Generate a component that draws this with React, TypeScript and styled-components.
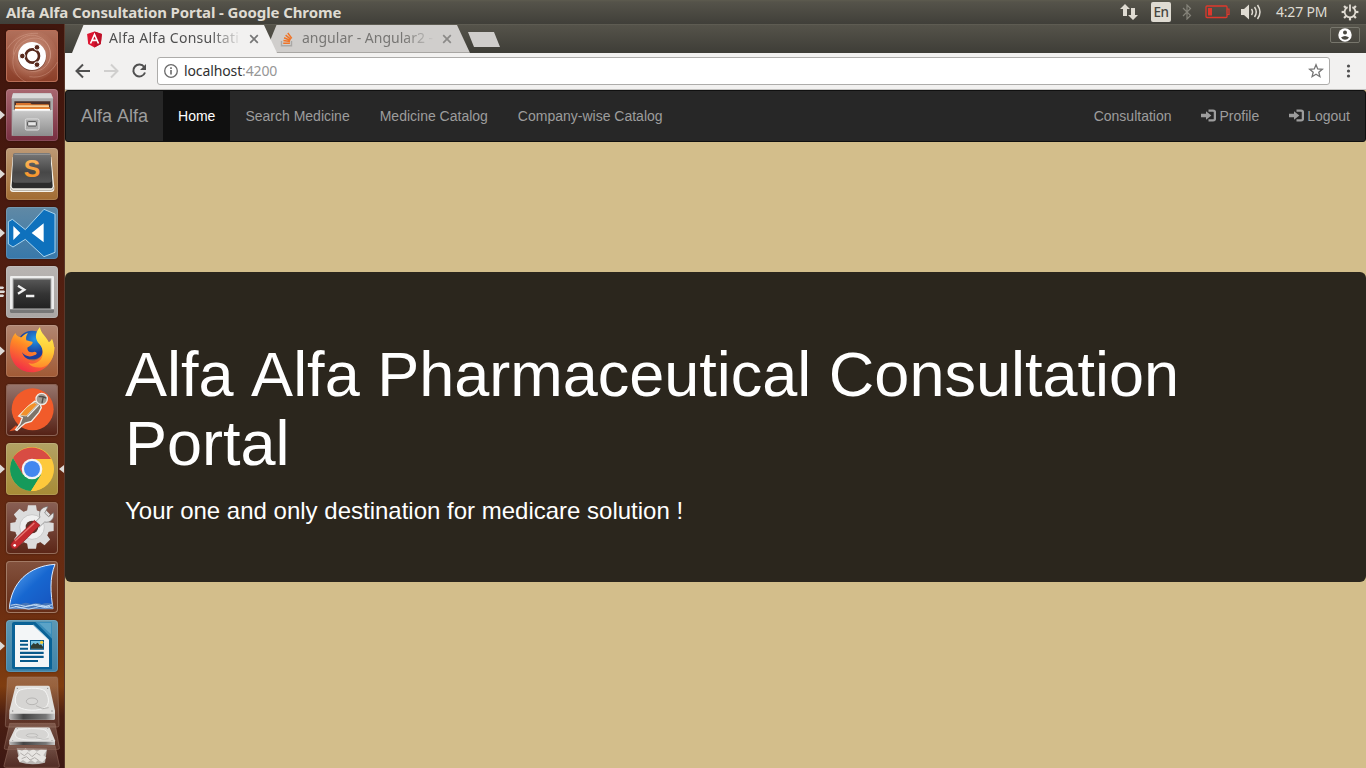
import React from 'react';
import styled, { createGlobalStyle, css } from 'styled-components';

const GlobalStyle = createGlobalStyle`
  * { box-sizing: border-box; }
  body { margin: 0; overflow: hidden; background: #43180e; }
  svg { display: block; flex: none; }
`;

const uiFont = css`font-family: 'Noto Sans', 'Open Sans', sans-serif;`;

const Desktop = styled.div`
  width: 1366px;
  height: 768px;
  display: flex;
  flex-direction: column;
  overflow: hidden;
`;

const SystemBar = styled.header`
  ${uiFont}
  height: 24px;
  flex: none;
  display: flex;
  align-items: center;
  justify-content: space-between;
  padding: 0 7px 0 6px;
  background: linear-gradient(#5d5b4f 0, #55534a 2px, #403f39 100%);
  color: #dfdbd2;
`;

const WindowTitle = styled.div`
  font-size: 15px;
  font-weight: 700;
  letter-spacing: -0.11px;
  line-height: 24px;
  white-space: nowrap;
`;

const Indicators = styled.div`
  display: flex;
  align-items: center;
  height: 24px;
`;

const LanguageBadge = styled.span`
  width: 20px;
  height: 20px;
  margin-left: 13px;
  border-radius: 2px;
  background: #dfdbd2;
  color: #45443e;
  font-size: 13.5px;
  font-weight: 500;
  letter-spacing: -0.5px;
  line-height: 21px;
  text-align: center;
`;

const Clock = styled.span`
  width: 54px;
  margin-left: 14px;
  font-size: 14px;
  letter-spacing: -0.2px;
  line-height: 24px;
  white-space: nowrap;
`;

const IndicatorIcon = styled.span<{ $gap: number }>`
  margin-left: ${(p) => p.$gap}px;
`;

const Workspace = styled.div`
  display: flex;
  flex: 1;
  min-height: 0;
`;

const Launcher = styled.nav`
  width: 65px;
  flex: none;
  display: flex;
  flex-direction: column;
  gap: 7px;
  padding-top: 6px;
  border-right: 1px solid #5a382b;
  background: linear-gradient(#40160d 0, #48190f 22%, #572211 42%, #622812 62%, #6b2d11 78%, #7f3d10 89%, #4a1e12 93%, #3c1813 100%);
  overflow: hidden;
`;

const LauncherRow = styled.div`
  height: 52px;
  flex: none;
  display: grid;
  grid-template-columns: 6px 52px 6px;
  align-items: center;
`;

const Tile = styled.div<{ $from: string; $to: string; $edge: string }>`
  width: 52px;
  height: 52px;
  border-radius: 4px;
  background: linear-gradient(${(p) => p.$from}, ${(p) => p.$to});
  box-shadow: inset 0 0 0 1px ${(p) => p.$edge}, 0 0 2px rgba(0, 0, 0, 0.45);
  overflow: hidden;
`;

const StackedDevices = styled.div`
  height: 93px;
  margin-top: -4px;
  flex: none;
`;

const BrowserWindow = styled.main`
  flex: 1;
  min-width: 0;
  display: flex;
  flex-direction: column;
`;

const TabStrip = styled.div`
  ${uiFont}
  height: 29px;
  flex: none;
  display: flex;
  align-items: flex-start;
  padding: 1px 6px 0 7px;
  background: linear-gradient(#66645a 0, #55534a 1px, #3e3d37 100%);
`;

const Tab = styled.div<{ $active?: boolean }>`
  width: 205px;
  height: 28px;
  flex: none;
  display: flex;
  align-items: center;
  padding: 0 17px 0 14px;
  margin-left: ${(p) => (p.$active ? '0' : '-12px')};
  z-index: ${(p) => (p.$active ? 1 : 0)};
  clip-path: polygon(0 100%, 11.5px 0, 192px 0, 100% 100%);
  background: ${(p) => (p.$active ? '#f2f1f0' : 'linear-gradient(#d0cecc 27px, #a8a6a3 27px)')};
  color: ${(p) => (p.$active ? '#505050' : '#777674')};
`;

const TabTitle = styled.span<{ $spacing: number }>`
  width: 134px;
  margin: 0 6px 2px 6px;
  font-size: 14px;
  letter-spacing: ${(p) => p.$spacing}px;
  line-height: 26px;
  white-space: nowrap;
  mask-image: linear-gradient(90deg, #000 102px, transparent 133px);
`;

const NewTab = styled.div`
  width: 32px;
  height: 15px;
  margin: 7px 0 0 -2px;
  clip-path: polygon(0 0, 26px 0, 32px 100%, 6px 100%);
  background: #cfcdcb;
`;

const ProfileButton = styled.div`
  width: 30px;
  height: 16px;
  margin: 2px 0 0 auto;
  display: flex;
  align-items: center;
  justify-content: center;
  border: 1px solid #77766c;
  border-radius: 2px;
`;

const Toolbar = styled.div`
  ${uiFont}
  height: 37px;
  flex: none;
  display: flex;
  align-items: center;
  padding: 0 8px 1px 9px;
  border-bottom: 1px solid #c2c1bf;
  background: #f2f1f0;
`;

const NavButtons = styled.div`
  width: 83px;
  display: flex;
  gap: 10px;
`;

const AddressBar = styled.div`
  width: 1173px;
  height: 28px;
  display: flex;
  align-items: center;
  padding: 0 5px;
  border: 1px solid #adacaa;
  border-radius: 3px;
  background: #fff;
`;

const Address = styled.span`
  flex: 1;
  margin-left: 5px;
  color: #303030;
  font-size: 14px;
  letter-spacing: -0.12px;
  line-height: 26px;
`;

const Port = styled.span`
  color: #969696;
`;

const MenuButton = styled.div`
  margin-left: 10px;
`;

const Page = styled.div`
  flex: 1;
  display: flex;
  flex-direction: column;
  background: #d3be8b;
  font-family: 'Liberation Sans', Arial, sans-serif;
`;

const Navbar = styled.nav`
  height: 52px;
  flex: none;
  display: flex;
  border: 1px solid #101010;
  border-radius: 3px;
  background: #272727;
`;

const Brand = styled.a`
  padding: 0 15px;
  color: #9d9d9d;
  font-size: 18px;
  line-height: 50px;
  word-spacing: 1px;
`;

const NavGroup = styled.div<{ $end?: boolean }>`
  display: flex;
  margin-left: ${(p) => (p.$end ? 'auto' : '0')};
`;

const NavLink = styled.a<{ $active?: boolean }>`
  display: flex;
  align-items: center;
  gap: 3px;
  padding: 0 15px;
  background: ${(p) => (p.$active ? '#101010' : 'transparent')};
  color: ${(p) => (p.$active ? '#fff' : '#9d9d9d')};
  font-size: 14px;
  line-height: 50px;
  white-space: nowrap;
`;

const Hero = styled.section`
  height: 310px;
  margin-top: 130px;
  padding: 68px 60px 48px;
  border-radius: 6px;
  background: #2b261d;
  color: #fff;
`;

const HeroTitle = styled.h1`
  margin: 0;
  font-size: 63px;
  font-weight: 400;
  line-height: 69.3px;
`;

const LeadWord = styled.span`
  margin-right: 0.056em;
`;

const HeroText = styled.h3`
  margin: 19px 0 0;
  font-size: 24px;
  font-weight: 400;
  line-height: 26.4px;
`;

const Icon = ({ size = 52, children }: { size?: number; children: React.ReactNode }) => (
  <svg width={size} height={size} viewBox="0 0 156 156">{children}</svg>
);

const UbuntuIcon = () => (
  <Icon>
    <defs>
      <radialGradient id="ubg"><stop offset=".3" stopColor="#ecc0aa" stopOpacity=".6" /><stop offset="1" stopColor="#c98a72" stopOpacity=".1" /></radialGradient>
    </defs>
    <circle cx="78" cy="78" r="76" fill="url(#ubg)" />
    <g fill="none" stroke="#e6b8a4" strokeOpacity=".5" strokeWidth="2">
      <path d="M60 156C20 136 8 90 36 50c20-26 60-36 84-12 16 18 18 44 6 62" />
      <path d="M22 74c-2-36 30-62 64-58 32 6 52 36 46 68-6 30-34 46-62 38" />
      <path d="M4 56C24 24 56 8 96 10M154 96c-18 34-48 50-84 44" />
    </g>
    <circle cx="78" cy="80" r="43" fill="#4b1c10" opacity=".5" />
    <circle cx="78" cy="78" r="42" fill="#fff" />
    <circle cx="79" cy="78" r="20" fill="none" stroke="#57291c" strokeWidth="8" />
    <g stroke="#fff" strokeWidth="3" fill="#57291c">
      <circle cx="49" cy="78" r="8.5" /><circle cx="93" cy="52" r="8.5" /><circle cx="93" cy="104" r="8.5" />
    </g>
  </Icon>
);

const FilesIcon = () => (
  <Icon>
    <defs>
      <linearGradient id="fg" x2="0" y2="1"><stop stopColor="#c9c9c9" /><stop offset="1" stopColor="#8d8d8d" /></linearGradient>
    </defs>
    <path d="M21 13h114l6 15v112H17V28z" fill="#aaa" />
    <path d="M21 13h114l6 15H17z" fill="#d9d9d9" />
    <path d="M25 37h108v30H25z" fill="#4a302a" />
    <path d="M30 42h43l4 4h51v10H30z" fill="#d9742c" />
    <path d="M27 49h102v5H27z" fill="#f6d29c" />
    <path d="M27 55h104v5H27z" fill="#e98534" />
    <path d="M26 60h106v6H26z" fill="#fff" />
    <path d="M20 65h119v76H20z" fill="url(#fg)" />
    <path d="M20 65h119" stroke="#eee" strokeWidth="2" />
    <rect x="58" y="90" width="41" height="33" rx="4" fill="#a9a9a9" stroke="#e2e2e2" strokeWidth="3" />
    <rect x="65" y="98" width="26" height="13" rx="2" fill="#e6e6e6" stroke="#4a4a4a" strokeWidth="3" />
  </Icon>
);

const SublimeIcon = () => (
  <Icon>
    <defs>
      <linearGradient id="sg" x2="0" y2="1"><stop stopColor="#777" /><stop offset=".65" stopColor="#474747" /><stop offset="1" stopColor="#555" /></linearGradient>
      <linearGradient id="sl" x2="0" y2="1"><stop stopColor="#ffc069" /><stop offset="1" stopColor="#f38a1c" /></linearGradient>
    </defs>
    <path d="M20 27h116l9 92q1 13-9 13H21q-10 0-9-13z" fill="#f5f2ea" />
    <path d="M14 118q1 9 8 9h113q8 0 8-9" fill="none" stroke="#8d8578" strokeWidth="2" />
    <path d="M23 22h110l7 91q0 8-7 8H24q-7 0-7-8z" fill="#2c2c2c" />
    <path d="M27 15h101q6 0 6 6l3 76q0 7-7 7H26q-7 0-7-7l2-76q0-6 6-6z" fill="url(#sg)" />
    <path d="M25 19h107" stroke="#aaa" strokeWidth="2" />
    <text x="78" y="86" textAnchor="middle" fontFamily="Liberation Sans, sans-serif" fontSize="74" fontWeight="700" fill="url(#sl)">S</text>
  </Icon>
);

const CodeIcon = () => (
  <Icon>
    <path d="M7 44l12-7 39 31 56-61 33 14v115l-33 13-56-52-37 23-14-9z" fill="#0e71bd" stroke="#a8d4ee" strokeWidth="3" />
    <path d="M22 57v42l21-21zM113 49v57L77 78z" fill="#fff" />
  </Icon>
);

const TerminalIcon = () => (
  <Icon>
    <defs><linearGradient id="tg" x2="0" y2="1"><stop stopColor="#565656" /><stop offset=".5" stopColor="#343434" /><stop offset="1" stopColor="#222" /></linearGradient></defs>
    <rect x="12" y="30" width="132" height="110" rx="3" fill="#ededed" />
    <path d="M12 130h132v8q0 3-3 3H15q-3 0-3-3z" fill="#777" />
    <rect x="20" y="37" width="116" height="92" fill="#969696" />
    <rect x="23" y="41" width="110" height="86" fill="url(#tg)" />
    <path d="M36 59l19 12-19 12M60 90h25" fill="none" stroke="#f0f0f0" strokeWidth="7" />
  </Icon>
);

const FirefoxIcon = () => (
  <Icon>
    <defs>
      <linearGradient id="ff1" x1=".8" y1=".1" x2=".3" y2="1"><stop stopColor="#ffd43c" /><stop offset=".4" stopColor="#ff8a25" /><stop offset="1" stopColor="#f22a48" /></linearGradient>
      <linearGradient id="ff2" x2="0" y2="1"><stop stopColor="#fff15a" /><stop offset=".6" stopColor="#ffca35" /><stop offset="1" stopColor="#ff8a2a" /></linearGradient>
      <radialGradient id="ff3" cx=".6" cy=".3"><stop stopColor="#2197e5" /><stop offset="1" stopColor="#1c3d9c" /></radialGradient>
    </defs>
    <circle cx="78" cy="60" r="43" fill="url(#ff3)" />
    <path d="M28 24c3 8 9 12 18 13 7-7 13-12 20-12-5 6-7 13-5 21 8 2 14 4 19 5 0 8-8 12-16 17 0 12 9 17 21 12 9 1 9 7 2 10-14 8-30 5-39-8 8 24 34 32 53 17 9-8 11-22 7-35l38 2c-4 46-29 76-69 76C35 142 9 106 12 67c1-15 6-31 16-43z" fill="url(#ff1)" />
    <path d="M102 6c-17 20-15 37-2 51 14 15 15 40-2 52-9 7-21 9-31 5 11 16 43 20 61 2 20-21 20-51 10-75-3 6-6 9-10 10-7-17-24-25-26-45z" fill="url(#ff2)" />
  </Icon>
);

const PostmanIcon = () => (
  <Icon>
    <circle cx="80" cy="76" r="63" fill="#f15b2a" />
    <path d="M10 142l20-18 8 10-12 5z" fill="#e75426" />
    <path d="M29 137l13-17 7-19-11-5 28-28 20-16 15 4 5 15-7 14-23 27-18 5-12 10-13 12z" fill="#7e746a" stroke="#f3eee8" strokeWidth="4" />
    <path d="M42 94c14-20 29-34 44-38l8 5-33 35z" fill="#f2902b" stroke="#f5e6cc" strokeWidth="2" />
    <path d="M64 98l34-35" stroke="#eee" strokeWidth="4" />
    <circle cx="107" cy="45" r="17" fill="#9f9990" stroke="#eee9e3" strokeWidth="4" />
    <path d="M98 38q14-2 23 5M112 38l-4 19" stroke="#514b46" strokeWidth="4" fill="none" />
  </Icon>
);

const ChromeIcon = () => (
  <Icon>
    <circle cx="78" cy="78" r="66" fill="#fdc93c" />
    <path d="M21 45A66 66 0 0 1 135 48H78L49 94z" fill="#d84c43" />
    <path d="M21 45A66 66 0 0 0 75 144l31-50-28 14-28-14z" fill="#159a5b" />
    <path d="M78 48h57a66 66 0 0 1-60 96l31-49z" fill="#fdc93c" />
    <circle cx="78" cy="78" r="31" fill="#f4f4f4" /><circle cx="78" cy="78" r="24" fill="#4387ef" />
  </Icon>
);

const SettingsIcon = () => (
  <Icon>
    <g fill="#dcdcdc">
      {[0, 45, 90, 135, 180, 225, 270, 315].map((a) => (
        <path key={a} d="M63 28l3-18h24l3 18z" transform={`rotate(${a} 78 75)`} />
      ))}
      <circle cx="78" cy="75" r="52" />
    </g>
    <circle cx="78" cy="75" r="37" fill="#f0f0f0" stroke="#bcbcbc" strokeWidth="2" />
    <circle cx="78" cy="75" r="19" fill="#5b342b" />
    <path d="M86 62l16-16c-6-17 6-33 24-32l-10 19 12 11 14-12c5 17-9 32-26 28L99 76z" fill="#e2e2e2" stroke="#777" strokeWidth="2" />
    <path d="M85 55l17 15-68 67q-9 8-17 0-7-9 2-17z" fill="#c42b2f" stroke="#861a1e" strokeWidth="2" />
    <path d="M85 63l-58 54" stroke="#e77772" strokeWidth="4" />
    <circle cx="26" cy="130" r="4" fill="#fff" />
  </Icon>
);

const WiresharkIcon = () => (
  <Icon>
    <defs><linearGradient id="wg" x2="1" y2="1"><stop stopColor="#65acf3" /><stop offset=".5" stopColor="#1767d0" /><stop offset="1" stopColor="#1753bd" /></linearGradient></defs>
    <path d="M10 143C15 65 69 15 147 10c-17 42-13 88-6 133z" fill="url(#wg)" stroke="#dbeaff" strokeWidth="3" />
    <path d="M13 132q17-8 30-2 17-9 32 0 18-8 32 0 16-8 32 0l2 13H10z" fill="#4776b7" />
    <path d="M14 133q16-6 30 0t30 0 30 0 34-2M12 141q20-8 38 0t38-1 52 1M26 136q20 8 38 0t38 0 30 0" fill="none" stroke="#cee4fb" strokeWidth="2.5" />
  </Icon>
);

const WriterIcon = () => (
  <Icon>
    <path d="M24 6h114v142H24q-6 0-6-6V12q0-6 6-6z" fill="#096296" />
    <path d="M88 6h50v50z" fill="#3a8db9" /><path d="M99 9h36v34z" fill="#5ba3c7" />
    <path d="M27 15h55l47 45v81H27z" fill="#f3f6f7" />
    <path d="M82 15l47 45" stroke="#9bc8df" strokeWidth="3" />
    <g fill="#075a8b">
      <path d="M42 60h24v6H42zM42 71h24v6H42zM42 83h24v6H42zM42 95h71v7H42zM42 107h71v7H42zM42 120h54v6H42z" />
      <path d="M72 60h42v29H72z" />
    </g>
    <path d="M75 63h36v23H75z" fill="#77c3e2" /><circle cx="107" cy="67" r="5" fill="#f4cf39" />
    <path d="M75 86V77l8-8 5 4 7-5 6 7 4-2 6 7v6z" fill="#303c32" />
  </Icon>
);

const Drive = () => (
  <g>
    <path d="M46 395q1-3 5-3h93q4 0 5 3l16 72v23q0 4-4 4H32q-4 0-4-4v-23z" fill="#e0dfdd" />
    <path d="M29 476h136v14q0 4-4 4H33q-4 0-4-4z" fill="url(#hd)" />
    <path d="M55 408c14-10 67-12 80 0 13 18 14 39 1 49-20 12-62 11-80-1-14-10-13-30-1-48z" fill="#d6d5d3" stroke="#f5f5f4" strokeWidth="3" />
    <ellipse cx="96" cy="439" rx="17" ry="10" fill="#d9d8d6" stroke="#a6a5a3" strokeWidth="2" />
    <path d="M108 452l20 9 18-3" fill="none" stroke="#b8b7b5" strokeWidth="3" />
    <g fill="#888"><circle cx="52" cy="400" r="2" /><circle cx="143" cy="400" r="2" /><circle cx="38" cy="468" r="2" /><circle cx="156" cy="468" r="2" /></g>
  </g>
);

const DeviceStack = () => (
  <svg width="65" height="93" viewBox="0 360 195 279">
    <defs>
      <linearGradient id="hd"><stop stopColor="#bbb" /><stop offset=".3" stopColor="#444" /><stop offset=".8" stopColor="#777" /><stop offset="1" stopColor="#ccc" /></linearGradient>
      <linearGradient id="pane" x2="0" y2="1"><stop stopColor="#e6d0c0" stopOpacity=".3" /><stop offset="1" stopColor="#906858" stopOpacity=".25" /></linearGradient>
    </defs>
    <path d="M27 572h138l13 60q1 5-5 5H17q-6 0-5-5z" fill="url(#pane)" stroke="#8c6558" strokeWidth="2" />
    <path d="M50 580l91 1-6 42q-40 10-76-1z" fill="#bcb9b6" />
    <path d="M52 581l14 7 11-8 10 10 13-8 11 8 12-8 17 4-10 15 9 7-12 14-13-7-8 8-13-8-12 8-12-8-10 7-7-14 7-8z" fill="#e7e5e2" />
    <path d="M61 594l12 8 11-9 12 12 13-11 12 7M65 611l15-6 10 10 14-7 12 8" stroke="#b2afac" strokeWidth="3" fill="none" />
    <path d="M29 505h136l13 73q1 5-5 5H17q-5 0-4-5z" fill="url(#pane)" stroke="#8c6558" strokeWidth="2" />
    <g transform="translate(0 313) scale(1 .52)"><Drive /></g>
    <path d="M27 366h141q5 0 5 5l4 140q0 5-5 5H21q-5 0-5-5l6-140q0-5 5-5z" fill="url(#pane)" stroke="#a28172" strokeOpacity=".7" strokeWidth="2" />
    <Drive />
  </svg>
);

type Mark = 'one' | 'many';

const RunningMark = ({ kind }: { kind?: Mark }) => (
  <svg width="6" height="12" viewBox="0 0 6 12">
    {kind === 'one' && <path d="M0 1.5L5 6 0 10.5z" fill="#dedad7" />}
    {kind === 'many' && <path d="M0 .6h3l1.200 1.200L3 3H0zM0 4.600h4l1.200 1.200L4 7H0zM0 8.600h3l1.200 1.200L3 11H0z" fill="#dedad7" />}
  </svg>
);

const FocusMark = () => (
  <svg width="6" height="12" viewBox="0 0 6 12"><path d="M6 2L1 6l5 4z" fill="#dedad7" /></svg>
);

interface LauncherApp {
  name: string;
  Art: () => React.JSX.Element;
  from: string;
  to: string;
  edge?: string;
  mark?: Mark;
  focused?: boolean;
}

const apps: LauncherApp[] = [
  { name: 'ubuntu', Art: UbuntuIcon, from: '#b1705b', to: '#8b3e28', edge: '#b86e57' },
  { name: 'files', Art: FilesIcon, from: '#a8676f', to: '#772e40', mark: 'one' },
  { name: 'sublime', Art: SublimeIcon, from: '#bd9975', to: '#a26c32', mark: 'one' },
  { name: 'code', Art: CodeIcon, from: '#6089a5', to: '#3878aa', mark: 'one' },
  { name: 'terminal', Art: TerminalIcon, from: '#b8b4b2', to: '#aaa6a4', mark: 'many' },
  { name: 'firefox', Art: FirefoxIcon, from: '#b18672', to: '#a15a35', mark: 'one' },
  { name: 'postman', Art: PostmanIcon, from: '#98766d', to: '#542014', edge: '#8b6254' },
  { name: 'chrome', Art: ChromeIcon, from: '#b2a264', to: '#a78b36', mark: 'one', focused: true },
  { name: 'settings', Art: SettingsIcon, from: '#896055', to: '#5b2516', edge: '#946b58' },
  { name: 'wireshark', Art: WiresharkIcon, from: '#83523e', to: '#652c16', edge: '#a27a65' },
  { name: 'writer', Art: WriterIcon, from: '#5c98b4', to: '#3f83a8', mark: 'one' },
];

const LoginGlyph = () => (
  <svg width="15" height="14" viewBox="0 0 15 14">
    <path d="M7.500 1.600h4.700q1.700 0 1.700 1.700v6.400q0 1.700-1.700 1.700H7.500" fill="none" stroke="#9d9d9d" strokeWidth="2.300" />
    <path d="M0 4.800h5V2.200l5.400 4.300L5 10.800V8.200H0z" fill="#9d9d9d" />
  </svg>
);

const CloseGlyph = ({ color }: { color: string }) => (
  <svg width="10" height="10" viewBox="0 0 10 10"><path d="M1.2 1.2l7.6 7.6M8.8 1.2L1.2 8.8" stroke={color} strokeWidth="1.7" /></svg>
);

const AngularGlyph = () => (
  <svg width="17" height="17" viewBox="0 0 17 17">
    <path d="M8.5.5l7.4 2.6-1.1 9.9-6.3 3.5L2.2 13 1.1 3.1z" fill="#dd1530" /><path d="M8.5.5l7.4 2.6-1.1 9.9-6.3 3.5z" fill="#bd1028" />
    <path d="M4.5 12.5l4-9 4 9M6 9.4h5" fill="none" stroke="#fff" strokeWidth="1.6" />
  </svg>
);

const StackGlyph = () => (
  <svg width="17" height="17" viewBox="0 0 17 17">
    <path d="M2.5 10v4.7h10V10" fill="none" stroke="#a9a8a6" strokeWidth="1.4" />
    <path d="M4.2 12.3h6.7M4.4 9.6l6.6 1M5.1 6.8l6.2 2.7M6.6 4.2l5.3 4.1M8.8 2l4 5.4" stroke="#ef7428" strokeWidth="1.500" />
  </svg>
);

const SystemIndicators = () => (
  <Indicators>
    <svg width="18" height="18" viewBox="0 0 18 18"><path d="M5 1l5 5H7v7H3V6H0zM11 5h4v7h3l-5 5-5-5h3z" fill="#dfdbd2" /></svg>
    <LanguageBadge>En</LanguageBadge>
    <IndicatorIcon $gap={11}>
      <svg width="10" height="16" viewBox="0 0 10 16"><path d="M1 4l7.5 7.5L5 15V1l3.5 3.5L1 12" fill="none" stroke="#85837a" strokeWidth="1.2" /></svg>
    </IndicatorIcon>
    <IndicatorIcon $gap={13}>
      <svg width="25" height="14" viewBox="0 0 25 14"><rect x="1" y="1" width="21" height="11.5" rx="1" fill="none" stroke="#df382c" strokeWidth="1.3" /><path d="M3 3h4v7.5H3z" fill="#df382c" /><path d="M22 4h2v5.5h-2" fill="none" stroke="#df382c" strokeWidth="1.2" /></svg>
    </IndicatorIcon>
    <IndicatorIcon $gap={11}>
      <svg width="21" height="18" viewBox="0 0 21 18"><path d="M0 6h3l5-4.5v15L3 12H0z" fill="#dfdbd2" /><path d="M10.5 6q2 3 0 6M13.5 4q3.5 5 0 10M16.5 2q5 7 0 14" fill="none" stroke="#dfdbd2" strokeWidth="1.5" /></svg>
    </IndicatorIcon>
    <Clock>4:27 PM</Clock>
    <IndicatorIcon $gap={11}>
      <svg width="18" height="18" viewBox="0 0 18 18">
        {[45, 90, 135, 180, 225, 270, 315].map((a) => (
          <path key={a} d="M7.900.6h2.200v3.200H7.900z" fill="#dfdbd2" transform={`rotate(${a} 9 9)`} />
        ))}
        <path d="M6.6 4.1a5.4 5.4 0 1 0 4.8 0" fill="none" stroke="#dfdbd2" strokeWidth="1.8" />
        <path d="M9 1.5v7" stroke="#dfdbd2" strokeWidth="1.8" />
      </svg>
    </IndicatorIcon>
  </Indicators>
);

export default function App() {
  return (
    <Desktop>
      <GlobalStyle />
      <SystemBar>
        <WindowTitle>Alfa Alfa Consultation Portal - Google Chrome</WindowTitle>
        <SystemIndicators />
      </SystemBar>
      <Workspace>
        <Launcher>
          {apps.map(({ name, Art, from, to, edge, mark, focused }) => (
            <LauncherRow key={name}>
              <RunningMark kind={mark} />
              <Tile $from={from} $to={to} $edge={edge ?? 'rgba(255,255,255,.13)'}><Art /></Tile>
              {focused && <FocusMark />}
            </LauncherRow>
          ))}
          <StackedDevices><DeviceStack /></StackedDevices>
        </Launcher>
        <BrowserWindow>
          <TabStrip>
            <Tab $active>
              <AngularGlyph />
              <TabTitle $spacing={0.3}>Alfa Alfa Consultati</TabTitle>
              <CloseGlyph color="#777" />
            </Tab>
            <Tab>
              <StackGlyph />
              <TabTitle $spacing={0}>angular - Angular2 -</TabTitle>
              <CloseGlyph color="#8b8a88" />
            </Tab>
            <NewTab />
            <ProfileButton>
              <svg width="14" height="14" viewBox="0 0 14 14"><circle cx="7" cy="7" r="6.7" fill="#fff" /><circle cx="7" cy="4.4" r="2" fill="#4a4942" /><path d="M3 9.6q4-3.4 8 0-1.5 2.2-4 2.2T3 9.6z" fill="#4a4942" /></svg>
            </ProfileButton>
          </TabStrip>
          <Toolbar>
            <NavButtons>
              <svg width="18" height="18" viewBox="0 0 18 18"><path d="M16 9H3M9 2.5L2.5 9 9 15.5" fill="none" stroke="#505050" strokeWidth="2" /></svg>
              <svg width="18" height="18" viewBox="0 0 18 18"><path d="M2 9h13M9 2.5L15.5 9 9 15.5" fill="none" stroke="#d0cfce" strokeWidth="2" /></svg>
              <svg width="18" height="18" viewBox="0 0 18 18"><path d="M14.2 5A6 6 0 1 0 15 10.5" fill="none" stroke="#505050" strokeWidth="2" /><path d="M16 2v6h-6z" fill="#505050" /></svg>
            </NavButtons>
            <AddressBar>
              <svg width="16" height="16" viewBox="0 0 16 16"><circle cx="8" cy="8" r="6.3" fill="none" stroke="#6a6a6a" strokeWidth="1.3" /><path d="M7.2 7h1.6v4.5H7.2zM7.2 4.3h1.6v1.6H7.2z" fill="#6a6a6a" /></svg>
              <Address>localhost<Port>:4200</Port></Address>
              <svg width="16" height="16" viewBox="0 0 16 16"><path d="M8 1.8l1.7 4.2 4.6.3-3.5 2.9 1.1 4.5L8 11.3l-3.9 2.4 1.1-4.5-3.5-2.9 4.6-.3z" fill="none" stroke="#757575" strokeWidth="1.3" /></svg>
            </AddressBar>
            <MenuButton>
              <svg width="16" height="16" viewBox="0 0 16 16" fill="#505050"><circle cx="8.5" cy="3" r="1.6" /><circle cx="8.5" cy="8" r="1.6" /><circle cx="8.5" cy="13" r="1.6" /></svg>
            </MenuButton>
          </Toolbar>
          <Page>
            <Navbar>
              <Brand>Alfa Alfa</Brand>
              <NavGroup>
                <NavLink $active>Home</NavLink>
                <NavLink>Search Medicine</NavLink>
                <NavLink>Medicine Catalog</NavLink>
                <NavLink>Company-wise Catalog</NavLink>
              </NavGroup>
              <NavGroup $end>
                <NavLink>Consultation</NavLink>
                <NavLink><LoginGlyph />Profile</NavLink>
                <NavLink><LoginGlyph />Logout</NavLink>
              </NavGroup>
            </Navbar>
            <Hero>
              <HeroTitle><LeadWord>Alfa</LeadWord> Alfa Pharmaceutical Consultation Portal</HeroTitle>
              <HeroText>Your one and only destination for medicare solution !</HeroText>
            </Hero>
          </Page>
        </BrowserWindow>
      </Workspace>
    </Desktop>
  );
}
